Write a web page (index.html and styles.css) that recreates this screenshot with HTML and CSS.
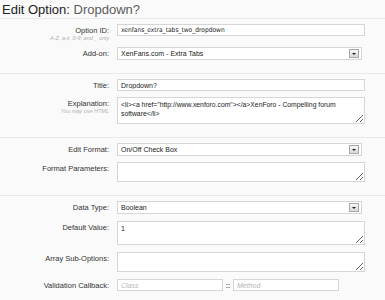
FILE: index.html
```html
<!DOCTYPE html>
<html lang="en">
<head>
  <meta charset="UTF-8" />
  <meta name="viewport" content="width=device-width, initial-scale=1.0" />
  <title>Edit Option: Dropdown?</title>
  <link rel="stylesheet" href="styles.css">
</head>
<body>
  <h1>Edit Option: <span>Dropdown?</span></h1>

  <form class="option-form">
    <fieldset class="group">
      <div class="row">
        <label class="label">Option ID:<span class="hint">A-Z, a-z, 0-9, and _ only</span></label>
        <div class="field"><input type="text" class="id" value="xenfans_extra_tabs_two_dropdown" /></div>
      </div>
      <div class="row">
        <label class="label">Add-on:</label>
        <div class="field"><div class="select">XenFans.com - Extra Tabs<span class="btn"></span></div></div>
      </div>
    </fieldset>

    <fieldset class="group">
      <div class="row">
        <label class="label">Title:</label>
        <div class="field"><input type="text" value="Dropdown?" /></div>
      </div>
      <div class="row">
        <label class="label">Explanation:<span class="hint">You may use HTML</span></label>
        <div class="field"><textarea class="explain">&lt;li&gt;&lt;a href="http://www.xenforo.com"&gt;&lt;/a&gt;XenForo - Compelling forum software&lt;/li&gt;</textarea></div>
      </div>
    </fieldset>

    <fieldset class="group">
      <div class="row">
        <label class="label">Edit Format:</label>
        <div class="field"><div class="select">On/Off Check Box<span class="btn"></span></div></div>
      </div>
      <div class="row">
        <label class="label">Format Parameters:</label>
        <div class="field"><textarea class="short"></textarea></div>
      </div>
    </fieldset>

    <fieldset class="group last">
      <div class="row">
        <label class="label">Data Type:</label>
        <div class="field"><div class="select">Boolean<span class="btn"></span></div></div>
      </div>
      <div class="row">
        <label class="label">Default Value:</label>
        <div class="field"><textarea class="value">1</textarea></div>
      </div>
      <div class="row">
        <label class="label">Array Sub-Options:</label>
        <div class="field"><textarea class="short"></textarea></div>
      </div>
      <div class="row">
        <label class="label">Validation Callback:</label>
        <div class="field callback">
          <input type="text" placeholder="Class" />
          <span class="sep">::</span>
          <input type="text" placeholder="Method" />
        </div>
      </div>
    </fieldset>
  </form>
</body>
</html>
```

FILE: styles.css
```css
body {
  margin: 0;
  background: #fafafa;
  font-family: "Liberation Sans", Arial, sans-serif;
  color: #333;
}

h1 {
  margin: 0;
  padding: 2px 0 0 2px;
  height: 16px;
  font-size: 13px;
  line-height: 16px;
  font-weight: normal;
  color: #222;
}
h1 span { color: #5a5a5a; }

.option-form { margin: 0; }

.group {
  margin: 0;
  border: 0;
  border-top: 1px solid #e5eaf0;
  padding: 5px 0 13px;
  display: flex;
  flex-direction: column;
  gap: 6px;
}
.group.last { gap: 7px; }

.row {
  display: grid;
  grid-template-columns: 109px 248px;
  column-gap: 8px;
  align-items: start;
}

.label {
  text-align: right;
  font-size: 7.5px;
  line-height: 9px;
  padding-top: 2px;
  color: #333;
}
.hint {
  display: block;
  font-size: 5.5px;
  line-height: 6px;
  font-style: italic;
  color: #b0b0b0;
}

.field input,
.field textarea {
  box-sizing: border-box;
  display: block;
  width: 100%;
  height: 12px;
  margin: 0;
  padding: 0 3px;
  border: 1px solid #d6d6d6;
  background: #fff;
  font: 7px "Liberation Sans", Arial, sans-serif;
  color: #222;
  outline: none;
}
.field input.id {
  font-family: "DejaVu Sans Condensed", "Liberation Sans", sans-serif;
  font-size: 6.6px;
}
.field textarea {
  padding: 2px 3px;
  line-height: 9px;
  resize: vertical;
}
.field textarea.explain { height: 27px; font-size: 6.8px; }
.field textarea.short { height: 20px; }
.field textarea.value { height: 24px; }
.field input::placeholder {
  color: #b5b5b5;
  font-style: italic;
}

.select {
  box-sizing: border-box;
  width: 245px;
  height: 13px;
  padding: 0 2px 0 3px;
  border: 1px solid #d6d6d6;
  background: #fff;
  display: flex;
  align-items: center;
  justify-content: space-between;
  font-size: 7px;
  color: #222;
}
.select .btn {
  box-sizing: border-box;
  width: 10px;
  height: 9px;
  border: 1px solid #a8a8a8;
  background: linear-gradient(#f6f6f6, #d9d9d9);
  display: flex;
  align-items: center;
  justify-content: center;
}
.select .btn::after {
  content: "";
  border-left: 2px solid transparent;
  border-right: 2px solid transparent;
  border-top: 2px solid #222;
}

.callback {
  display: flex;
  align-items: center;
}
.field.callback input { width: 106px; }
.callback .sep {
  width: 10px;
  text-align: center;
  font-size: 7px;
  font-weight: bold;
  color: #555;
}
```
